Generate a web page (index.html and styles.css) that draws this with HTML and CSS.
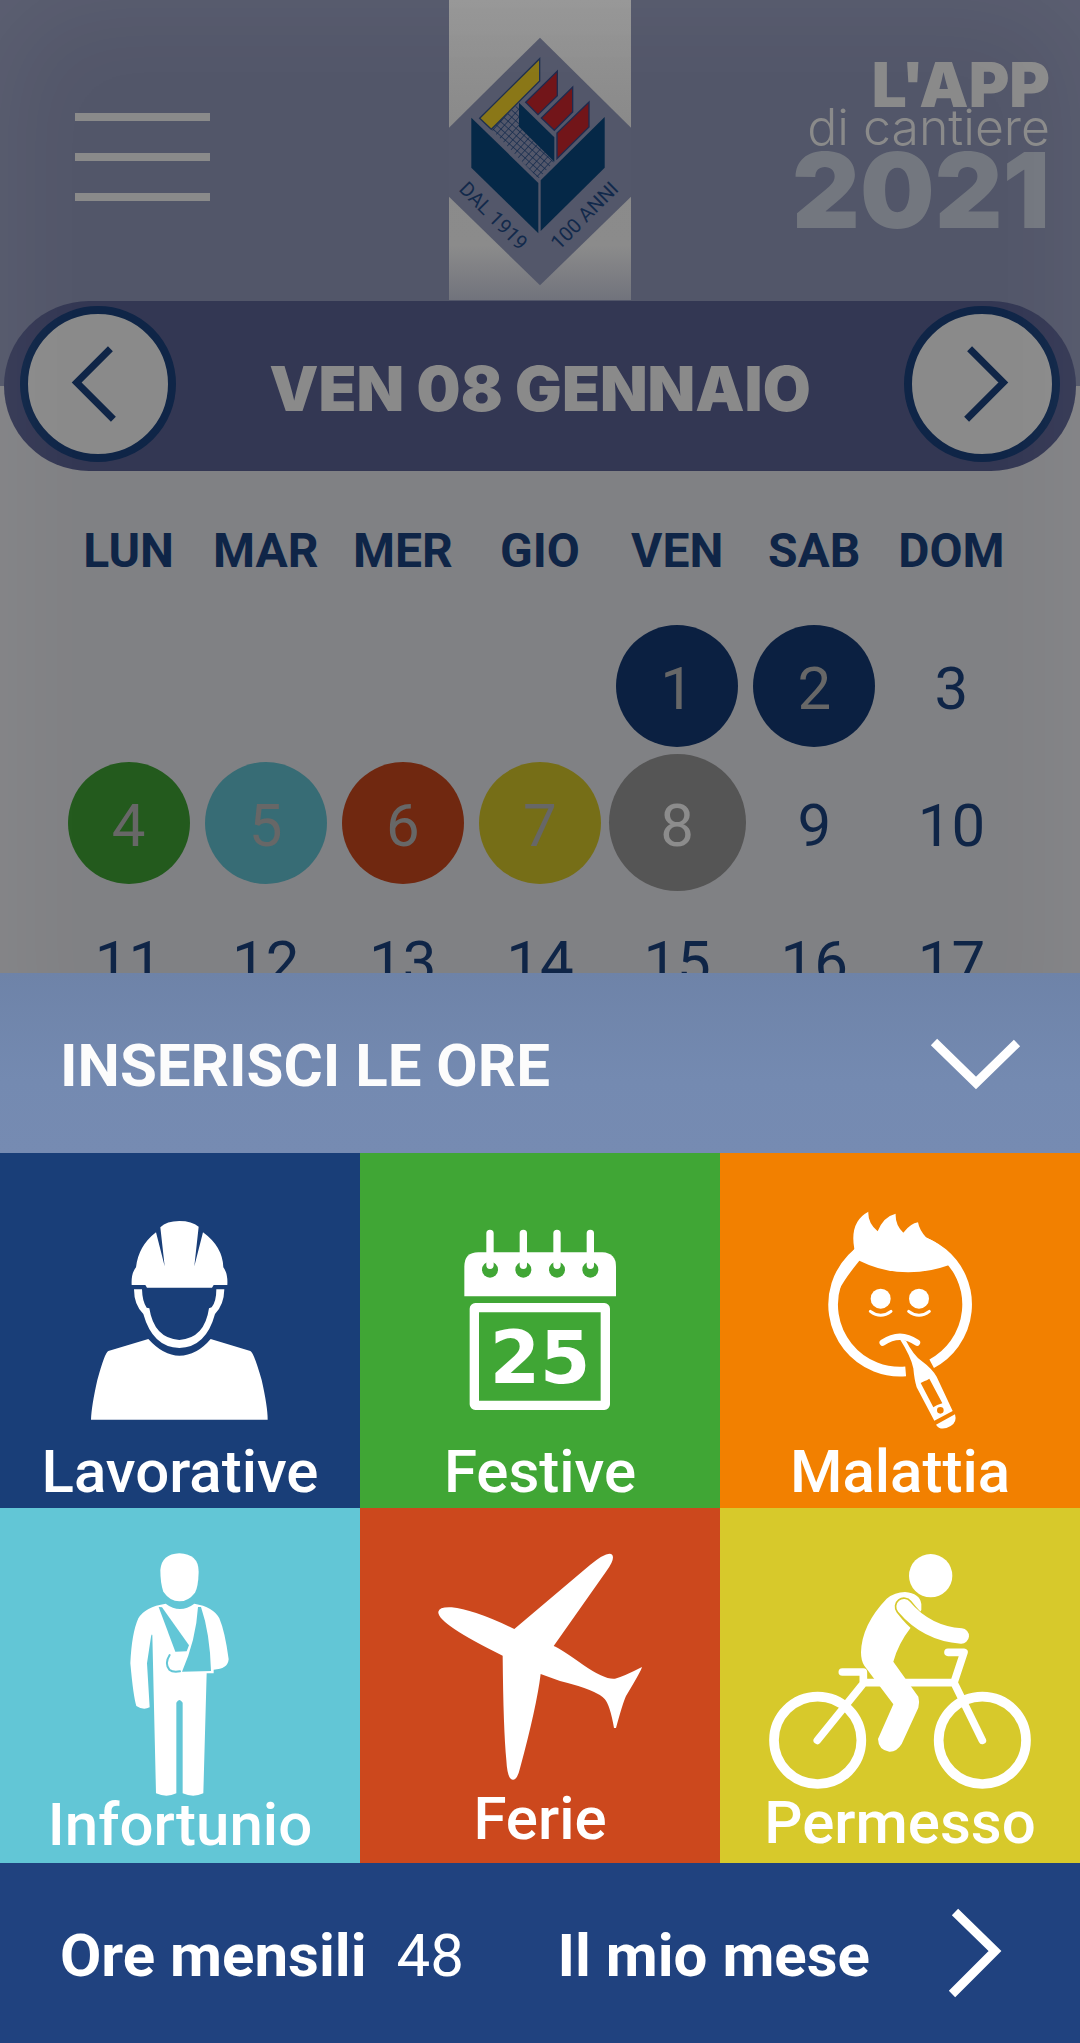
FILE: index.html
```html
<!DOCTYPE html>
<html lang="it">
<head>
<meta charset="utf-8">
<meta name="viewport" content="width=device-width, initial-scale=1">
<title>L'APP di cantiere 2021</title>
<link rel="stylesheet" href="styles.css">
</head>
<body>
<div class="app">
  <div class="backdrop">
    <header class="header">
      <button class="menu" type="button" aria-label="Menu"><span></span><span></span><span></span></button>
      <svg class="logo" viewBox="57 0 546 900" role="img" aria-label="Dal 1919, 100 anni">
        <defs>
          <linearGradient id="paper" x1="0" y1="0" x2="0" y2="1">
            <stop offset="0" stop-color="#959595"/>
            <stop offset=".4" stop-color="#8a8a8a"/>
            <stop offset=".82" stop-color="#8b8b8b"/>
            <stop offset="1" stop-color="#71737c"/>
          </linearGradient>
          <pattern id="net" width="16" height="16" patternUnits="userSpaceOnUse" patternTransform="rotate(42)">
            <path d="M0 0H16M0 0V16" stroke="#12294b" stroke-width="4"/>
          </pattern>
        </defs>
        <rect x="57" y="0" width="546" height="900" fill="url(#paper)"/>
        <path d="M330 113L603 383V590L330 856L57 590V383Z" fill="#53576a"/>
        <path d="M184 388L267 310V380L372 485L325 536Z" fill="url(#net)"/>
        <path d="M329 176V243L184 388L149 355Z" fill="#8a7717" stroke="#1f3050" stroke-width="4"/>
        <path d="M382 213V287L324 344L287 307Z" fill="#721519" stroke="#1f2a4e" stroke-width="4"/>
        <path d="M428 261V336L373 391L334 354Z" fill="#721519" stroke="#1f2a4e" stroke-width="4"/>
        <path d="M477 306V381L381 476V399Z" fill="#721519" stroke="#1f2a4e" stroke-width="4"/>
        <path d="M267 308L373 412V485L267 380Z" fill="#052847"/>
        <path d="M124 353L325 549V700L124 503Z" fill="#052847"/>
        <path d="M524 351V503L332 693V541Z" fill="#052847"/>
        <text class="logo-text" transform="translate(84 570) rotate(45)">DAL 1919</text>
        <text class="logo-text" transform="translate(387 752) rotate(-45)">100 ANNI</text>
      </svg>
      <div class="brand">
        <span class="brand-app">L'APP</span>
        <span class="brand-site">di cantiere</span>
        <span class="brand-year">2021</span>
      </div>
    </header>

    <div class="date-wrap">
      <div class="date-bar">
        <button class="round" type="button" aria-label="Giorno precedente">
          <svg viewBox="0 0 141 141"><path d="M83 35L49 69L86 106"/></svg>
        </button>
        <h1>VEN 08 GENNAIO</h1>
        <button class="round" type="button" aria-label="Giorno successivo">
          <svg viewBox="0 0 141 141"><path d="M58 35L92 69L55 106"/></svg>
        </button>
      </div>
    </div>

    <div class="calendar">
      <table>
        <thead>
          <tr><th scope="col">LUN</th><th scope="col">MAR</th><th scope="col">MER</th><th scope="col">GIO</th><th scope="col">VEN</th><th scope="col">SAB</th><th scope="col">DOM</th></tr>
        </thead>
        <tbody>
          <tr>
            <td></td><td></td><td></td><td></td>
            <td><button type="button" class="day work">1</button></td>
            <td><button type="button" class="day work">2</button></td>
            <td><button type="button" class="day">3</button></td>
          </tr>
          <tr>
            <td><button type="button" class="day holiday">4</button></td>
            <td><button type="button" class="day injury">5</button></td>
            <td><button type="button" class="day leave">6</button></td>
            <td><button type="button" class="day permit">7</button></td>
            <td><button type="button" class="day selected">8</button></td>
            <td><button type="button" class="day">9</button></td>
            <td><button type="button" class="day">10</button></td>
          </tr>
          <tr>
            <td><button type="button" class="day">11</button></td>
            <td><button type="button" class="day">12</button></td>
            <td><button type="button" class="day">13</button></td>
            <td><button type="button" class="day">14</button></td>
            <td><button type="button" class="day">15</button></td>
            <td><button type="button" class="day">16</button></td>
            <td><button type="button" class="day">17</button></td>
          </tr>
        </tbody>
      </table>
    </div>
  </div>

  <section class="sheet">
    <button class="sheet-head" type="button">
      <span>INSERISCI LE ORE</span>
      <svg class="arrow" viewBox="0 0 90 90"><path d="M4 22L46 63L87 23"/></svg>
    </button>

    <div class="tiles">
      <button class="tile tile-work" type="button">
        <svg viewBox="0 9 1080 864">
          <path d="M408 352Q415 288 468 247L494 349L481 232Q500 213 538 213Q576 213 596 230L583 349L609 247Q668 290 670 352Q684 370 682 405H641L636 413H441L436 405H395Q393 370 408 352Z"/>
          <path d="M402 418H426Q427 455 440 473L448 475Q462 565 538 570Q614 565 627 475L635 472Q649 455 649 418H673Q672 465 645 492Q618 592 538 594Q458 592 430 492Q402 465 402 418Z"/>
          <path d="M445 567Q490 617 538 617Q590 617 632 567L751 603Q761 606 785 690Q803 770 803 809H273Q274 770 292 690Q315 606 325 603Z"/>
        </svg>
        <span>Lavorative</span>
      </button>
      <button class="tile tile-holiday" type="button">
        <svg viewBox="0 9 1080 864">
          <path d="M313 439V350Q313 307 355 307H727Q768 309 768 350V439Z"/>
          <g class="cut"><circle cx="390" cy="359" r="24"/><circle cx="490" cy="359" r="24"/><circle cx="591" cy="359" r="24"/><circle cx="691" cy="359" r="24"/></g>
          <path class="line" stroke-width="22" d="M390 250V346M490 250V346M591 250V346M691 250V346"/>
          <rect class="line" stroke-width="28" x="343" y="473" width="393" height="293" rx="3"/>
          <text class="cal-number" x="540" y="698">25</text>
        </svg>
        <span>Festive</span>
      </button>
      <button class="tile tile-sick" type="button">
        <svg viewBox="0 9 1080 864">
          <path class="line butt" stroke-width="29" d="M557 664A201 201 0 1 1 635 641"/>
          <path d="M403 297Q388 215 445 185Q443 220 473 244Q490 200 527 191Q525 225 550 248Q572 220 594 217Q598 240 618 262Q670 285 712 338L740 400L724 420Q708 370 688 345Q545 395 418 332Q375 385 357 420L340 395Z"/>
          <circle cx="482" cy="446" r="30"/><circle cx="597" cy="446" r="30"/>
          <path class="line" stroke-width="9" d="M451 484Q482 508 513 484M566 484Q597 508 628 484"/>
          <path class="line" stroke-width="19" d="M488 578Q540 542 591 578"/>
          <path fill-rule="evenodd" d="M538 565L558 572Q580 615 605 633Q635 655 650 680L698 783L643 812L590 712Q583 690 580 655Q573 620 538 565ZM602 699L614 693Q620 692 628 686L667 760Q650 765 640 772ZM661 771A10 10 0 1 0 661 791A10 10 0 1 0 661 771Z"/>
          <path d="M648 824L705 793Q712 817 692 828Q662 845 648 824Z"/>
        </svg>
        <span>Malattia</span>
      </button>
      <button class="tile tile-injury" type="button">
        <svg viewBox="0 24 1080 858">
          <path d="M538 160Q596 162 596 215Q595 260 585 278Q565 304 538 304Q510 304 490 275Q481 250 481 210Q485 162 538 160Z"/>
          <path d="M497 311Q540 343 583 311Q640 320 658 355Q675 395 686 478Q683 508 641 509V520H620L610 880Q580 894 548 880V608Q538 592 529 608V880Q500 894 468 880L457 405Q455 400 453 410L441 490L449 622Q430 632 409 618Q400 590 391 490Q395 400 415 355Q435 320 497 311Z"/>
          <g class="cut"><path d="M476 321L486 322L567 436L560 454L526 455Z"/><path d="M594 321H603Q630 400 633 513L546 515Q588 420 594 321Z"/></g>
          <path class="cut-line" stroke-width="6" d="M509 465Q493 490 508 509Q518 518 540 514"/>
        </svg>
        <span>Infortunio</span>
      </button>
      <button class="tile tile-leave" type="button">
        <svg viewBox="0 24 1080 840">
          <path d="M463 387L690 195Q745 150 757 165Q765 178 740 212L581 438Q600 445 670 495Q735 540 765 536Q790 530 846 501Q845 510 798 588Q788 610 768 684H762Q750 615 734 597Q710 570 600 543L542 522Q530 620 480 805Q472 840 459 839Q442 840 439 780Q430 690 428 467Q230 370 235 335Q238 320 275 322Q340 328 463 387Z"/>
        </svg>
        <span>Ferie</span>
      </button>
      <button class="tile tile-permit" type="button">
        <svg viewBox="0 24 1080 852">
          <circle class="line" stroke-width="29" cx="293" cy="721" r="131"/>
          <circle class="line" stroke-width="29" cx="787" cy="721" r="131"/>
          <circle cx="632" cy="227" r="65"/>
          <path class="line" stroke-width="23" d="M367 516H430V548M432 548H702M432 548L292 721M787 721L702 548L732 457H684"/>
          <path d="M555 276Q600 280 604 312V330L573 382Q535 431 520 485L595 590Q600 607 595 623L545 732Q530 756 508 755Q475 750 474 717L520 613L433 497Q423 483 423 457Q425 374 500 296Q525 276 555 276Z"/>
          <path class="cut-line" stroke-width="56" d="M552 320Q580 356 600 370"/>
          <path class="line" stroke-width="46" d="M552 320Q620 400 724 408"/>
        </svg>
        <span>Permesso</span>
      </button>
    </div>

    <footer class="footer">
      <p class="hours"><strong>Ore mensili</strong><span>48</span></p>
      <a class="month" href="#mese">
        <span>Il mio mese</span>
        <svg class="arrow" viewBox="0 0 90 90"><path d="M25 2L65 41L22 84"/></svg>
      </a>
    </footer>
  </section>
</div>
</body>
</html>
```
FILE: styles.css
```css
* {
  box-sizing: border-box;
}

body {
  margin: 0;
  font-family: Roboto, "Liberation Sans", sans-serif;
  background: #808184;
}

button {
  margin: 0;
  padding: 0;
  border: 0;
  background: none;
  color: inherit;
  font: inherit;
  cursor: pointer;
}

a {
  color: inherit;
  text-decoration: none;
}

svg {
  display: block;
}

.app {
  display: flex;
  flex-direction: column;
  height: 100vh;
}

/* dimmed page behind the open sheet */
.backdrop {
  position: relative;
  flex: 1 1 0;
  min-height: 0;
  overflow: hidden;
  background: #808184;
}

.backdrop::after {
  content: "";
  position: absolute;
  inset: 0 0 -120px;
  box-shadow: inset 0 0 120px rgba(255, 255, 255, 0.07);
  pointer-events: none;
}

.header {
  display: grid;
  grid-template-columns: 1fr 182px 1fr;
  align-items: start;
  padding-bottom: 1px;
  background: #525669;
}

.menu {
  display: flex;
  flex-direction: column;
  gap: 32px;
  width: 135px;
  margin: 113px 0 0 75px;
}

.menu span {
  height: 8px;
  background: #8a8a8a;
}

.logo {
  width: 100%;
}

.logo-text {
  font-size: 60px;
  fill: #12294b;
}

.brand {
  display: flex;
  flex-direction: column;
  align-items: flex-end;
  padding: 63px 30px 0 0;
  font-family: Inter, "Liberation Sans", sans-serif;
  color: #8a8a8a;
  white-space: nowrap;
}

.brand-app {
  font-size: 62px;
  font-weight: 900;
  line-height: 44px;
}

.brand-site {
  font-size: 50px;
  font-weight: 300;
  line-height: 40px;
}

.brand-year {
  font-size: 105px;
  font-weight: 900;
  line-height: 86px;
  color: #73777f;
}

.date-wrap {
  padding: 0 4px;
  background: linear-gradient(#525669 50%, #808184 50%);
}

.date-bar {
  display: flex;
  align-items: flex-start;
  justify-content: space-between;
  height: 170px;
  padding: 5px 16px;
  border-radius: 85px;
  background: #333753;
}

.date-bar h1 {
  margin: 0;
  padding-top: 8px;
  font-family: Inter, "Liberation Sans", sans-serif;
  font-size: 62px;
  font-weight: 900;
  line-height: 150px;
  color: #8a8a8a;
}

.round {
  flex: none;
  width: 156px;
  height: 156px;
  border: 8px solid #0f2547;
  border-radius: 50%;
  background: #8a8a8a;
}

.round path {
  fill: none;
  stroke: #0f2547;
  stroke-width: 7;
}

.calendar {
  padding: 52px 60px 0;
  color: #0f2547;
}

.calendar table {
  width: 100%;
  border-collapse: collapse;
  table-layout: fixed;
}

.calendar th {
  padding: 0 0 38px;
  font-size: 48px;
  font-weight: 700;
  line-height: 56px;
}

.calendar td {
  height: 137px;
  padding: 0;
}

.day {
  display: flex;
  align-items: center;
  justify-content: center;
  width: 122px;
  height: 122px;
  margin: 0 auto;
  padding-top: 6px;
  border-radius: 50%;
  font-size: 60px;
  line-height: 60px;
}

.work,
.holiday,
.injury,
.leave,
.permit {
  color: #676767;
}

.work {
  background: #0b2041;
}

.holiday {
  background: #235a1d;
}

.injury {
  background: #376c75;
}

.leave {
  background: #702810;
}

.permit {
  background: #766e17;
}

.selected {
  width: 137px;
  height: 137px;
  background: #555;
  color: #8c8c8c;
}

.sheet {
  flex: none;
  color: #fff;
}

.sheet-head {
  display: flex;
  align-items: center;
  justify-content: space-between;
  width: 100%;
  height: 180px;
  padding: 4px 60px 0;
  background: linear-gradient(#6e83a8, #748ab1 60%, #768bb2);
  color: #fcfcfc;
  font-size: 60px;
  font-weight: 700;
}

.arrow {
  flex: none;
  width: 90px;
  height: 90px;
  overflow: visible;
}

.arrow path {
  fill: none;
  stroke: #fff;
  stroke-width: 9;
}

.tiles {
  display: grid;
  grid-template-columns: repeat(3, 1fr);
  grid-auto-rows: minmax(355px, auto);
}

.tile {
  display: flex;
  flex-direction: column;
  justify-content: flex-start;
  background: var(--tone);
  font-size: 60px;
  font-weight: 500;
  line-height: 62px;
  text-align: center;
}

.tile svg {
  width: 100%;
  overflow: visible;
  fill: #fff;
}

.tile span {
  width: 100%;
}

.tile .line {
  fill: none;
  stroke: #fff;
  stroke-linecap: round;
  stroke-linejoin: round;
}

.tile .butt {
  stroke-linecap: butt;
}

.tile .cut {
  fill: var(--tone);
}

.tile .cut-line {
  fill: none;
  stroke: var(--tone);
  stroke-linecap: round;
}

.cal-number {
  font-family: "DejaVu Sans", sans-serif;
  font-size: 217px;
  font-weight: 700;
  text-anchor: middle;
}

.tile-work {
  --tone: #193e78;
}

.tile-holiday {
  --tone: #40a635;
}

.tile-sick {
  --tone: #f28000;
}

.tile-injury {
  --tone: #62c6d6;
}

.tile-leave {
  --tone: #cc481d;
}

.tile-permit {
  --tone: #d7c92b;
}

.footer {
  display: flex;
  align-items: center;
  justify-content: space-between;
  height: 180px;
  padding: 4px 60px 0;
  background: #20427f;
  font-size: 60px;
}

.hours {
  display: flex;
  gap: 30px;
  margin: 0;
}

.month {
  display: flex;
  align-items: center;
  gap: 60px;
  font-weight: 700;
}
```
